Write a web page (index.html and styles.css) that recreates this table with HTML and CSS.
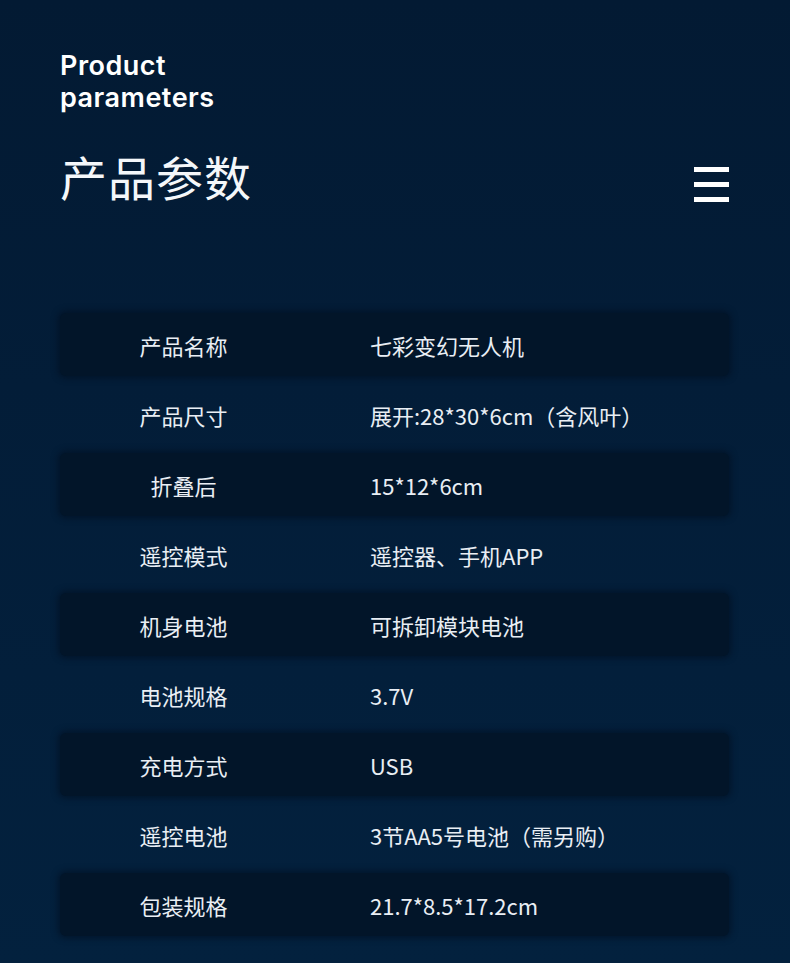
FILE: index.html
```html
<!DOCTYPE html>
<html lang="zh">
<head>
<meta charset="utf-8">
<title>产品参数</title>
<link rel="stylesheet" href="styles.css">
</head>
<body>
<div class="page">
  <header class="head">
    <div class="en">Product<br>parameters</div>
    <div class="title-row">
      <h1 class="zh">产品参数</h1>
      <div class="menu"><span></span><span></span><span></span></div>
    </div>
  </header>
  <ul class="params">
    <li class="row dark"><span class="k">产品名称</span><span class="v">七彩变幻无人机</span></li>
    <li class="row"><span class="k">产品尺寸</span><span class="v">展开:28*30*6cm（含风叶）</span></li>
    <li class="row dark"><span class="k">折叠后</span><span class="v">15*12*6cm</span></li>
    <li class="row"><span class="k">遥控模式</span><span class="v">遥控器、手机APP</span></li>
    <li class="row dark"><span class="k">机身电池</span><span class="v">可拆卸模块电池</span></li>
    <li class="row"><span class="k">电池规格</span><span class="v">3.7V</span></li>
    <li class="row dark"><span class="k">充电方式</span><span class="v">USB</span></li>
    <li class="row"><span class="k">遥控电池</span><span class="v">3节AA5号电池（需另购）</span></li>
    <li class="row dark"><span class="k">包装规格</span><span class="v">21.7*8.5*17.2cm</span></li>
  </ul>
</div>
</body>
</html>
```
FILE: styles.css
```css
* { box-sizing: border-box; }
html, body { margin: 0; padding: 0; }
body {
  background: linear-gradient(180deg, #031a33 0%, #031d38 40%, #03213e 100%);
  min-height: 963px;
  color: #ffffff;
  font-family: "Noto Sans CJK SC", "Noto Sans", sans-serif;
}
.page { padding: 50px 61px 0 60px; }
.head { display: flex; flex-direction: column; }
.en {
  font-family: "Inter", "Noto Sans", sans-serif;
  font-weight: 600;
  font-size: 27px;
  line-height: 32px;
  letter-spacing: 0.5px;
  color: #ffffff;
}
.title-row {
  margin-top: 32px;
  display: flex;
  align-items: center;
  justify-content: space-between;
}
.zh {
  margin: 0;
  font-weight: 400;
  font-size: 47px;
  line-height: 60px;
  letter-spacing: 1px;
  color: #f4f7fa;
}
.menu {
  display: flex;
  flex-direction: column;
  gap: 10px;
  width: 35px;
  margin-top: 16px;
}
.menu span { display: block; height: 5px; background: #ffffff; }
.params {
  list-style: none;
  margin: 107px 0 0 0;
  padding: 0;
  display: flex;
  flex-direction: column;
  gap: 7px;
}
.row {
  height: 63px;
  display: flex;
  align-items: center;
  border-radius: 6px;
  font-size: 22px;
  color: #e9eef4;
}
.row.dark {
  background: #021529;
  box-shadow: 0 0 6px 2px rgba(1, 14, 30, 0.6);
}
.k { width: 250px; text-align: center; padding-right: 3px; }
.v { margin-left: 60px; }
```
